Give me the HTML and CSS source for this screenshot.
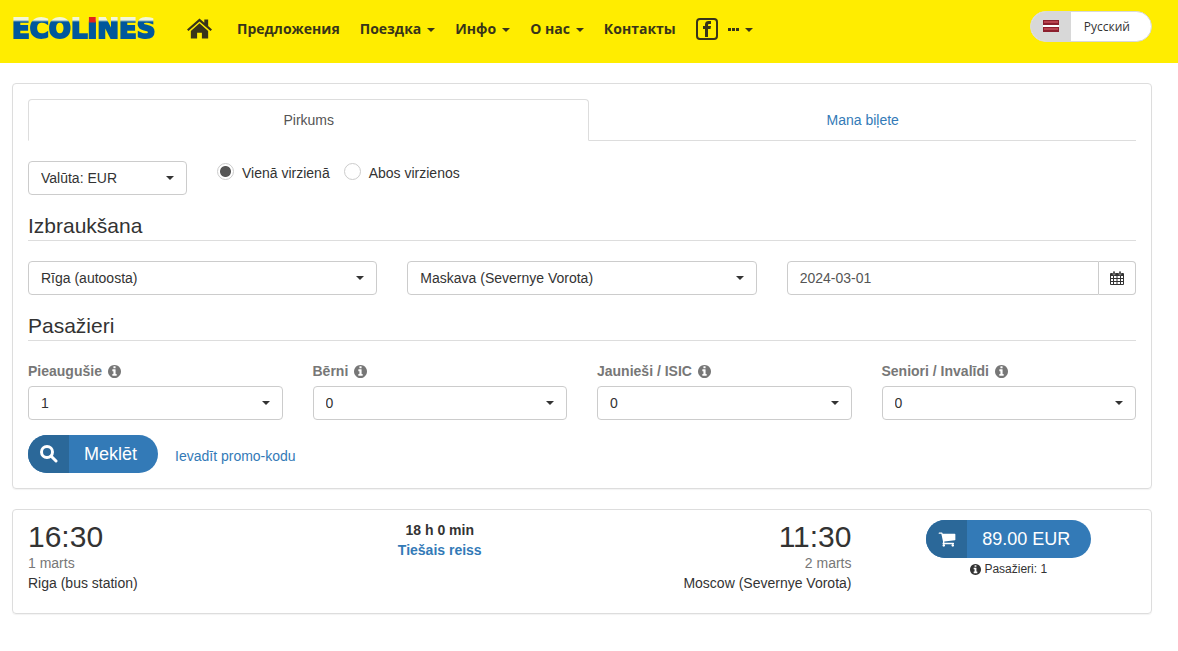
FILE: index.html
```html
<!DOCTYPE html>
<html lang="lv">
<head>
    <meta charset="UTF-8">
    <meta name="viewport" content="width=device-width, initial-scale=1.0">
    <title>Ecolines</title>
    <link rel="stylesheet" href="styles.css">
</head>
<body>

<!-- shared icons -->
<svg class="sprite" xmlns="http://www.w3.org/2000/svg">
    <symbol id="icon-info" viewBox="128 128 1536 1536">
        <path d="M1152 1376v-160q0-14-9-23t-23-9h-96v-512q0-14-9-23t-23-9h-320q-14 0-23 9t-9 23v160q0 14 9 23t23 9h96v320h-96q-14 0-23 9t-9 23v160q0 14 9 23t23 9h448q14 0 23-9t9-23zm-128-896v-160q0-14-9-23t-23-9h-192q-14 0-23 9t-9 23v160q0 14 9 23t23 9h192q14 0 23-9t9-23zm640 416q0 209-103 385.500t-279.500 279.500-385.500 103-385.500-103-279.500-279.500-103-385.500 103-385.500 279.500-279.500 385.500-103 385.500 103 279.500 279.500 103 385.500z"/>
    </symbol>
</svg>

<header class="header">
    <a class="logo" href="#">ECOL<span class="logo-i">I</span>NES</a>
    <nav class="menu">
        <a class="home" href="#" aria-label="Home">
            <svg width="25" height="22" viewBox="0 0 26 22">
                <path d="M13 5 22 13v8h-6.500v-6h-5v6H4v-8z"/>
                <path d="M13 0 18 4.500V1h4v7l4 3.500-1.500 1.700L13 3.200 1.500 13.200 0 11.500z"/>
            </svg>
        </a>
        <a href="#">Предложения</a>
        <a href="#">Поездка <span class="caret"></span></a>
        <a href="#">Инфо <span class="caret"></span></a>
        <a href="#">О нас <span class="caret"></span></a>
        <a href="#">Контакты</a>
        <a class="facebook" href="#" aria-label="Facebook">
            <svg width="22" height="22" viewBox="0 0 22 22">
                <rect x="1" y="1" width="20" height="20" rx="3" fill="none" stroke="currentColor" stroke-width="2"/>
                <path d="M9 19v-8H7V8h2V6.500C9 4 10.500 3 12.500 3H15v3h-1.500C12.500 6 12 6.300 12 7v1h3l-.5 3H12v8z"/>
            </svg>
        </a>
        <a class="more" href="#" aria-label="More">
            <svg width="11" height="3" viewBox="0 0 11 3"><path d="M0 0h3v3H0zM4 0h3v3H4zM8 0h3v3H8z"/></svg>
            <span class="caret"></span>
        </a>
    </nav>
    <button type="button" class="language">
        <span class="language-flag">
            <svg width="16" height="12" viewBox="0 0 16 12">
                <path fill="#8c1f2e" d="M0 0h16v12H0z"/>
                <path fill="#b9424f" d="M1 1h14v2H1zM1 8h14v2H1z"/>
                <path fill="#fff" d="M0 5h16v2H0z"/>
            </svg>
        </span>
        <span class="language-name">Русский</span>
    </button>
</header>

<main class="container">
    <form class="panel search">
        <div class="tabs">
            <a class="tab active" href="#">Pirkums</a>
            <a class="tab" href="#">Mana biļete</a>
        </div>

        <div class="options">
            <select class="control currency" aria-label="Valūta">
                <option>Valūta: EUR</option>
            </select>
            <div class="radios">
                <label><input type="radio" name="direction" checked> Vienā virzienā</label>
                <label><input type="radio" name="direction"> Abos virzienos</label>
            </div>
        </div>

        <h2>Izbraukšana</h2>
        <div class="route">
            <select class="control" aria-label="No">
                <option>Rīga (autoosta)</option>
            </select>
            <select class="control" aria-label="Uz">
                <option>Maskava (Severnye Vorota)</option>
            </select>
            <div class="date">
                <input type="text" class="control" value="2024-03-01" aria-label="Datums">
                <button type="button" aria-label="Kalendārs">
                    <svg width="14" height="14" viewBox="0 0 14 14">
                        <path fill-rule="evenodd" d="M1 2h12a1 1 0 0 1 1 1v10a1 1 0 0 1-1 1H1a1 1 0 0 1-1-1V3a1 1 0 0 1 1-1zM1 5v2h2V5zM4 5v2h2.500V5zM7.500 5v2H10V5zM11 5v2h2V5zM1 8v2h2V8zM4 8v2h2.500V8zM7.500 8v2H10V8zM11 8v2h2V8zM1 11v2h2v-2zM4 11v2h2.500v-2zM7.500 11v2H10v-2zM11 11v2h2v-2z"/>
                        <rect x="3" y="0" width="2" height="4" rx="1" stroke="#fff" stroke-width=".4"/>
                        <rect x="9" y="0" width="2" height="4" rx="1" stroke="#fff" stroke-width=".4"/>
                    </svg>
                </button>
            </div>
        </div>

        <h2>Pasažieri</h2>
        <div class="passengers">
            <div>
                <label for="adults">Pieaugušie <svg class="info"><use href="#icon-info"/></svg></label>
                <select class="control" id="adults"><option>1</option></select>
            </div>
            <div>
                <label for="children">Bērni <svg class="info"><use href="#icon-info"/></svg></label>
                <select class="control" id="children"><option>0</option></select>
            </div>
            <div>
                <label for="youth">Jaunieši / ISIC <svg class="info"><use href="#icon-info"/></svg></label>
                <select class="control" id="youth"><option>0</option></select>
            </div>
            <div>
                <label for="seniors">Seniori / Invalīdi <svg class="info"><use href="#icon-info"/></svg></label>
                <select class="control" id="seniors"><option>0</option></select>
            </div>
        </div>

        <div class="actions">
            <button type="submit" class="pill">
                <span class="pill-icon">
                    <svg width="18" height="18" viewBox="0 0 18 18">
                        <circle cx="7" cy="7" r="5.500" fill="none" stroke="currentColor" stroke-width="3"/>
                        <path d="M11 11l5 5" stroke="currentColor" stroke-width="3" stroke-linecap="round"/>
                    </svg>
                </span>
                <span class="pill-text">Meklēt</span>
            </button>
            <a href="#">Ievadīt promo-kodu</a>
        </div>
    </form>

    <section class="panel trip">
        <div>
            <div class="time">16:30</div>
            <div class="day">1 marts</div>
            <div>Riga (bus station)</div>
        </div>
        <div class="duration">
            <div>18 h 0 min</div>
            <a href="#">Tiešais reiss</a>
        </div>
        <div class="arrival">
            <div class="time">11:30</div>
            <div class="day">2 marts</div>
            <div>Moscow (Severnye Vorota)</div>
        </div>
        <div class="price">
            <button type="button" class="pill">
                <span class="pill-icon">
                    <svg width="18" height="18" viewBox="0 0 1792 1792"><path d="M704 1536q0 52-38 90t-90 38-90-38-38-90 38-90 90-38 90 38 38 90zm896 0q0 52-38 90t-90 38-90-38-38-90 38-90 90-38 90 38 38 90zm128-1088v512q0 24-16.500 42.500t-40.500 21.500l-1044 122q13 60 13 70 0 16-24 64h920q26 0 45 19t19 45-19 45-45 19h-1024q-26 0-45-19t-19-45q0-11 8-31.500t16-36 21.500-40 15.500-29.500l-177-823h-204q-26 0-45-19t-19-45 19-45 45-19h256q16 0 28.500 6.500t19.500 15.500 13 24.500 8 26 5.500 29.500 4.500 26h1201q26 0 45 19t19 45z"/></svg>
                </span>
                <span class="pill-text">89.00 EUR</span>
            </button>
            <div class="note"><svg class="info"><use href="#icon-info"/></svg> Pasažieri: 1</div>
        </div>
    </section>
</main>

</body>
</html>
```

FILE: styles.css
```css
* {
    box-sizing: border-box;
}
body {
    margin: 0;
    font-family: "Liberation Sans", Arial, sans-serif;
    font-size: 14px;
    line-height: 20px;
    color: #333;
    background-color: #fff;
}
a {
    color: #337ab7;
    text-decoration: none;
}
svg {
    fill: currentColor;
}
button, input, select {
    font-family: inherit;
    font-size: 14px;
    color: inherit;
}
button {
    padding: 0;
    cursor: pointer;
}
.sprite {
    display: none;
}

/* header */
.header {
    display: flex;
    align-items: flex-start;
    height: 63px;
    padding: 11px 26px 0 12px;
    background-color: #ffed00;
    font-family: "Open Sans", sans-serif;
}
.logo {
    min-width: 150px;
    margin-right: 25px;
    font-family: "DejaVu Sans", sans-serif;
    font-size: 26px;
    font-weight: bold;
    line-height: 36px;
    color: transparent;
    background: linear-gradient(#f4f7d8 9px, #00579c 11px);
    background-clip: text;
    -webkit-text-stroke: 2px transparent;
}
.logo-i {
    background: linear-gradient(#e2231a 8px, #00579c 9px);
    background-clip: text;
}
.menu {
    display: flex;
    align-items: center;
    gap: 20px;
    height: 36px;
}
.menu a {
    display: flex;
    align-items: center;
    font-weight: bold;
    color: #38341a;
}
.menu .home {
    margin-right: 5px;
}
.menu .more {
    margin-left: -10px;
}
.caret {
    margin: 2px 0 0 6px;
    border-top: 4px solid;
    border-left: 4px solid transparent;
    border-right: 4px solid transparent;
}
.language {
    display: flex;
    height: 31px;
    margin-left: auto;
    border: 1px solid #d8d8d8;
    border-radius: 16px;
    overflow: hidden;
    background-color: #fff;
    font-family: inherit;
    font-size: 12px;
    line-height: 29px;
}
.language-flag {
    display: flex;
    align-items: center;
    padding: 0 12px;
    height: 27px;
    background-color: #d8d8d8;
    box-shadow: 0 2px #d8d8d8;
}
.language-name {
    padding: 0 21px 0 13px;
}

/* panels */
.container {
    padding: 20px 26px 20px 12px;
}
.panel {
    margin-bottom: 20px;
    border: 1px solid #ddd;
    border-radius: 4px;
    box-shadow: 0 1px 1px rgba(0, 0, 0, 0.05);
}
.search {
    padding: 15px;
}
.tabs {
    display: flex;
    margin-bottom: 20px;
}
.tab {
    flex: 40;
    padding: 11px 15px 10px;
    border-bottom: 1px solid #ddd;
    text-align: center;
}
.tab.active {
    flex: 41;
    padding-top: 10px;
    border: 1px solid #ddd;
    border-bottom-color: transparent;
    border-radius: 4px 4px 0 0;
    color: #555;
}
.control {
    display: block;
    width: 100%;
    height: 34px;
    padding: 0 12px;
    border: 1px solid #ccc;
    border-radius: 4px;
    background-color: #fff;
}
select.control {
    appearance: none;
    background-image: url("data:image/svg+xml,%3Csvg xmlns='http://www.w3.org/2000/svg' width='8' height='4'%3E%3Cpath fill='%23333' d='M0 0h8L4 4z'/%3E%3C/svg%3E");
    background-repeat: no-repeat;
    background-position: right 12px center;
}
.options {
    display: flex;
    gap: 30px;
}
.currency {
    width: 159px;
}
.radios {
    display: flex;
    gap: 14px;
    padding-top: 2px;
}
.radios label {
    display: flex;
    align-items: flex-start;
    gap: 8px;
}
.radios input {
    appearance: none;
    width: 17px;
    height: 17px;
    margin: 0;
    border: 1px solid #ccc;
    border-radius: 50%;
}
.radios input:checked {
    background: radial-gradient(circle, #555 5px, #fff 6px);
}
h2 {
    margin: 20px 0;
    padding-bottom: 4px;
    border-bottom: 1px solid #ddd;
    font-size: 21px;
    font-weight: normal;
    line-height: 21px;
}
.route {
    display: grid;
    grid-template-columns: 1fr 1fr 1fr;
    gap: 30px;
}
.date {
    display: flex;
}
.date input {
    flex: 1;
    min-width: 0;
    border-radius: 4px 0 0 4px;
    color: #555;
}
.date button {
    display: flex;
    align-items: center;
    padding: 0 11px;
    border: 1px solid #ccc;
    border-left: none;
    border-radius: 0 4px 4px 0;
    background-color: #fff;
}
.passengers {
    display: grid;
    grid-template-columns: repeat(4, 1fr);
    gap: 30px;
}
.passengers label {
    display: flex;
    align-items: center;
    gap: 6px;
    margin-bottom: 5px;
    font-weight: bold;
    color: #777;
}
.info {
    width: 13px;
    height: 13px;
}
.actions {
    display: flex;
    align-items: center;
    gap: 17px;
    margin-top: 15px;
}
.actions a {
    padding-top: 4px;
}
.pill {
    display: flex;
    height: 38px;
    border: none;
    border-radius: 19px;
    overflow: hidden;
    background-color: #337ab7;
    color: #fff;
    font-size: 18px;
    line-height: 38px;
}
.pill-icon {
    display: flex;
    align-items: center;
    justify-content: center;
    width: 41px;
    height: 38px;
    background-color: #2b6899;
}
.pill-text {
    padding: 0 21px 0 15px;
}

/* trip */
.trip {
    display: grid;
    grid-template-columns: repeat(4, 1fr);
    padding: 10px 0 20px;
}
.trip > div {
    padding: 0 15px;
}
.time {
    font-size: 30px;
    line-height: 33px;
}
.day {
    color: #777;
}
.duration {
    text-align: center;
    font-weight: bold;
}
.arrival {
    text-align: right;
}
.price {
    display: flex;
    flex-direction: column;
    align-items: center;
}
.note {
    display: flex;
    align-items: center;
    gap: 3px;
    margin-top: 1px;
    font-size: 12px;
}
.note .info {
    width: 11px;
    height: 11px;
}
```
